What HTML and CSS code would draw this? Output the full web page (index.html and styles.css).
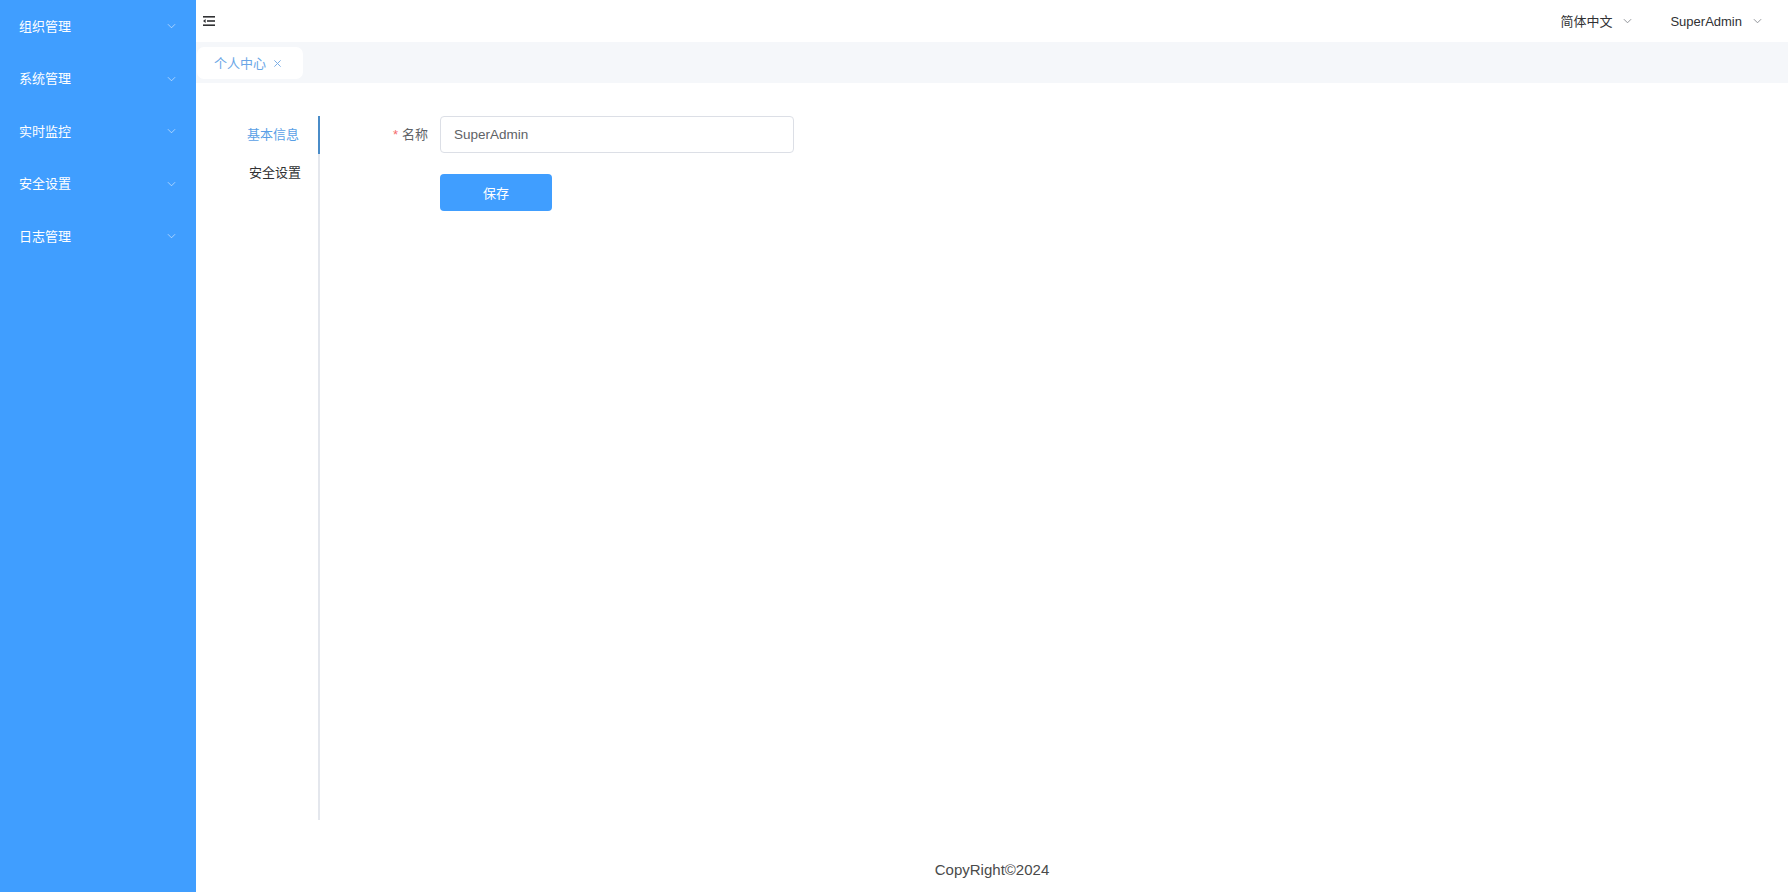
FILE: index.html
```html
<!DOCTYPE html>
<html lang="zh-CN">
<head>
<meta charset="utf-8">
<title>个人中心</title>
<link rel="stylesheet" href="styles.css">
</head>
<body>
<div class="app">
  <aside class="sidebar">
    <ul class="menu">
      <li class="menu-item"><span>组织管理</span><svg class="chev" viewBox="0 0 10 6"><path d="M1 1l4 4 4-4" /></svg></li>
      <li class="menu-item"><span>系统管理</span><svg class="chev" viewBox="0 0 10 6"><path d="M1 1l4 4 4-4" /></svg></li>
      <li class="menu-item"><span>实时监控</span><svg class="chev" viewBox="0 0 10 6"><path d="M1 1l4 4 4-4" /></svg></li>
      <li class="menu-item"><span>安全设置</span><svg class="chev" viewBox="0 0 10 6"><path d="M1 1l4 4 4-4" /></svg></li>
      <li class="menu-item"><span>日志管理</span><svg class="chev" viewBox="0 0 10 6"><path d="M1 1l4 4 4-4" /></svg></li>
    </ul>
  </aside>
  <div class="main">
    <header class="header">
      <svg class="fold" viewBox="0 0 12 10"><rect x="0" y="0" width="12" height="1.6"/><rect x="4" y="4.2" width="8" height="1.6"/><path d="M0 5l2.6-2v4z"/><rect x="0" y="8.4" width="12" height="1.6"/></svg>
      <div class="header-right">
        <div class="drop">简体中文<svg class="chev-dark" viewBox="0 0 10 6"><path d="M1 1l4 4 4-4" /></svg></div>
        <div class="drop">SuperAdmin<svg class="chev-dark" viewBox="0 0 10 6"><path d="M1 1l4 4 4-4" /></svg></div>
      </div>
    </header>
    <div class="tabs-bar">
      <div class="tab">个人中心<svg class="close" viewBox="0 0 10 10"><path d="M1.5 1.5l7 7M8.5 1.5l-7 7"/></svg></div>
    </div>
    <div class="content">
      <nav class="side-tabs">
        <div class="side-tab active">基本信息</div>
        <div class="side-tab">安全设置</div>
      </nav>
      <form class="form">
        <div class="form-row">
          <label class="label"><span class="star">*</span>名称</label>
          <div class="input">SuperAdmin</div>
        </div>
        <div class="form-row btn-row">
          <button type="button" class="btn">保存</button>
        </div>
      </form>
    </div>
    <footer class="footer">CopyRight©2024</footer>
  </div>
</div>
</body>
</html>
```
FILE: styles.css
```css
* { box-sizing: border-box; }
html, body { margin: 0; padding: 0; }
body {
  font-family: "Liberation Sans", "Noto Sans CJK SC", sans-serif;
  font-size: 13px;
  color: #303133;
  background: #fff;
}
.app { display: flex; width: 1788px; height: 892px; overflow: hidden; }
.sidebar { width: 196px; flex: none; background: #409eff; }
.menu { list-style: none; margin: 0; padding: 0; }
.menu-item {
  height: 52.5px;
  display: flex;
  align-items: center;
  justify-content: space-between;
  padding: 0 20px 0 19px;
  color: #fff;
  font-size: 13px;
  line-height: 1;
}
.chev { width: 9px; height: 6px; fill: none; stroke: rgba(255,255,255,0.55); stroke-width: 1.1; }
.main { flex: 1; display: flex; flex-direction: column; min-width: 0; }
.header {
  height: 42px;
  flex: none;
  display: flex;
  align-items: center;
  justify-content: space-between;
  padding: 0 26px 0 7px;
  background: #fff;
}
.fold { width: 12px; height: 10px; fill: #303133; }
.header-right { display: flex; align-items: center; gap: 38px; }
.drop { display: flex; align-items: center; gap: 11px; font-size: 13px; color: #303133; line-height: 1; }
.chev-dark { width: 9px; height: 6px; fill: none; stroke: #909399; stroke-width: 1.1; }
.tabs-bar {
  height: 41px;
  flex: none;
  background: #f5f7fa;
  padding: 5px 0 0 1px;
}
.tab {
  width: 106px;
  height: 32px;
  background: #fff;
  border-radius: 7px;
  display: flex;
  align-items: center;
  padding-left: 17px;
  gap: 7px;
  color: #6aa6e6;
  font-size: 13px;
  line-height: 1;
}
.close { width: 9px; height: 9px; fill: none; stroke: #7aaee6; stroke-width: 1.1; }
.content { flex: 1; display: flex; padding-top: 33px; min-height: 0; }
.side-tabs {
  width: 124px;
  flex: none;
  height: 704px;
  border-right: 2px solid #e4e7ed;
}
.side-tab {
  height: 37.5px;
  display: flex;
  align-items: center;
  justify-content: flex-end;
  padding-right: 19px;
  font-size: 13px;
  color: #303133;
  margin-right: -2px;
  line-height: 1;
}
.side-tab.active { color: #5a9fe6; border-right: 2px solid #4a8cc8; }
.form { margin-left: 20px; }
.form-row { display: flex; align-items: center; }
.label {
  width: 100px;
  padding-right: 12px;
  text-align: right;
  font-size: 13px;
  color: #606266;
  line-height: 1;
}
.star { color: #f56c6c; margin-right: 4px; }
.input {
  width: 354px;
  height: 37px;
  border: 1px solid #dcdfe6;
  border-radius: 4px;
  padding-left: 13px;
  display: flex;
  align-items: center;
  font-size: 13.5px;
  color: #606266;
}
.btn-row { margin-top: 21px; padding-left: 100px; }
.btn {
  width: 112px;
  height: 37px;
  border: none;
  border-radius: 4px;
  background: #409eff;
  color: #fff;
  font-family: "Liberation Sans", "Noto Sans CJK SC", sans-serif;
  font-size: 13px;
  padding: 0;
}
.footer {
  height: 46px;
  flex: none;
  display: flex;
  align-items: center;
  justify-content: center;
  font-size: 15px;
  color: #4a4a4a;
}
```
